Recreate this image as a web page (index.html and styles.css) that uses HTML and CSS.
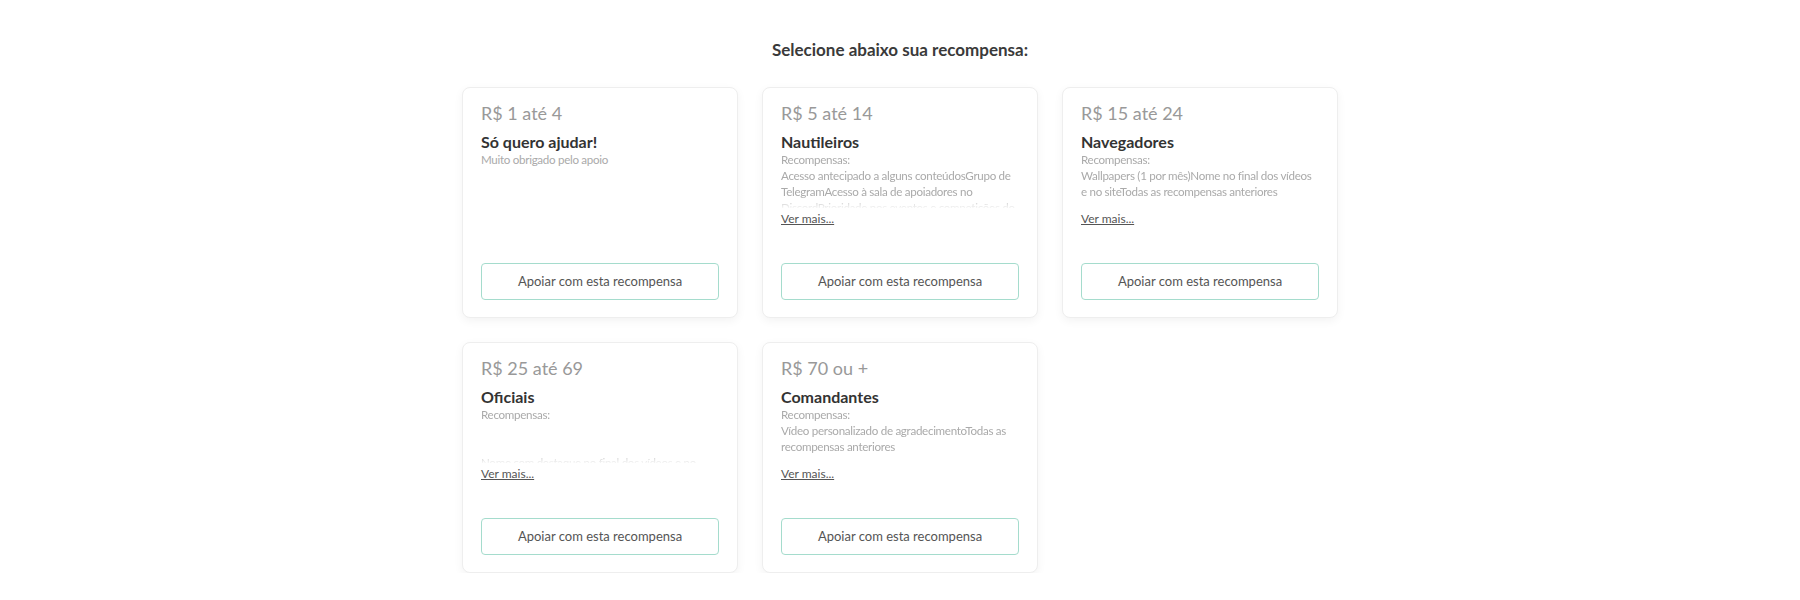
FILE: index.html
```html
<!DOCTYPE html>
<html lang="pt-BR">
<head>
    <meta charset="UTF-8">
    <title>Recompensas</title>
    <link rel="stylesheet" href="styles.css">
</head>
<body>
    <section class="rewards">
        <h2 class="rewards-title">Selecione abaixo sua recompensa:</h2>

        <div class="reward-grid">
            <div class="reward-card">
                <div class="reward-price">R$ 1 até 4</div>
                <h3 class="reward-name">Só quero ajudar!</h3>
                <div class="reward-desc">Muito obrigado pelo apoio</div>
                <a href="#" class="reward-btn">Apoiar com esta recompensa</a>
            </div>

            <div class="reward-card">
                <div class="reward-price">R$ 5 até 14</div>
                <h3 class="reward-name">Nautileiros</h3>
                <div class="reward-desc clipped">
                    Recompensas:<br>
                    Acesso antecipado a alguns conteúdosGrupo de TelegramAcesso à sala de apoiadores no DiscordPrioridade nos eventos e competições do canal
                </div>
                <a href="#" class="see-more">Ver mais...</a>
                <a href="#" class="reward-btn">Apoiar com esta recompensa</a>
            </div>

            <div class="reward-card">
                <div class="reward-price">R$ 15 até 24</div>
                <h3 class="reward-name">Navegadores</h3>
                <div class="reward-desc clipped">
                    Recompensas:<br>
                    Wallpapers (1 por mês)Nome no final dos vídeos e no siteTodas as recompensas anteriores
                </div>
                <a href="#" class="see-more">Ver mais...</a>
                <a href="#" class="reward-btn">Apoiar com esta recompensa</a>
            </div>

            <div class="reward-card">
                <div class="reward-price">R$ 25 até 69</div>
                <h3 class="reward-name">Oficiais</h3>
                <div class="reward-desc clipped">
                    Recompensas:<br><br><br>
                    Nome com destaque no final dos vídeos e no siteTodas as recompensas anteriores
                </div>
                <a href="#" class="see-more">Ver mais...</a>
                <a href="#" class="reward-btn">Apoiar com esta recompensa</a>
            </div>

            <div class="reward-card">
                <div class="reward-price">R$ 70 ou +</div>
                <h3 class="reward-name">Comandantes</h3>
                <div class="reward-desc clipped">
                    Recompensas:<br>
                    Vídeo personalizado de agradecimentoTodas as recompensas anteriores
                </div>
                <a href="#" class="see-more">Ver mais...</a>
                <a href="#" class="reward-btn">Apoiar com esta recompensa</a>
            </div>
        </div>
    </section>
</body>
</html>
```

FILE: styles.css
```css
* {
    margin: 0;
    padding: 0;
    box-sizing: border-box;
    font-family: 'Lato', 'Open Sans', sans-serif;
}

body {
    background: #fff;
    color: #333;
}

.rewards {
    width: 876px;
    margin: 0 auto;
    padding-top: 40px;
}

.rewards-title {
    text-align: center;
    font-size: 17px;
    line-height: 20px;
    font-weight: bold;
    color: #3a3a3a;
    margin-bottom: 27px;
}

.reward-grid {
    display: grid;
    grid-template-columns: repeat(3, 1fr);
    gap: 24px;
}

.reward-card {
    background: #fff;
    border: 1px solid #eee;
    border-radius: 8px;
    box-shadow: 0 3px 10px rgba(0, 0, 0, 0.05);
    padding: 13px 18px 17px;
    display: flex;
    flex-direction: column;
}

.reward-price {
    font-size: 18px;
    line-height: 24px;
    color: #999;
}

.reward-name {
    font-size: 16px;
    line-height: 20px;
    font-weight: bold;
    color: #333;
    margin-top: 7px;
}

.reward-desc {
    font-size: 11.6px;
    line-height: 16px;
    letter-spacing: -0.3px;
    color: #aaa;
}

.reward-desc.clipped {
    height: 56px;
    overflow: hidden;
    -webkit-mask-image: linear-gradient(to bottom, #000 44px, rgba(0, 0, 0, 0.1) 56px);
    mask-image: linear-gradient(to bottom, #000 44px, rgba(0, 0, 0, 0.1) 56px);
}

.see-more {
    font-size: 12px;
    line-height: 16px;
    color: #555;
    margin-top: 3px;
    margin-bottom: 36px;
    align-self: flex-start;
}

.reward-btn {
    margin-top: auto;
    display: block;
    height: 37px;
    line-height: 35px;
    border: 1px solid #a5dccd;
    border-radius: 4px;
    text-align: center;
    text-decoration: none;
    font-size: 13px;
    color: #555;
}
```
